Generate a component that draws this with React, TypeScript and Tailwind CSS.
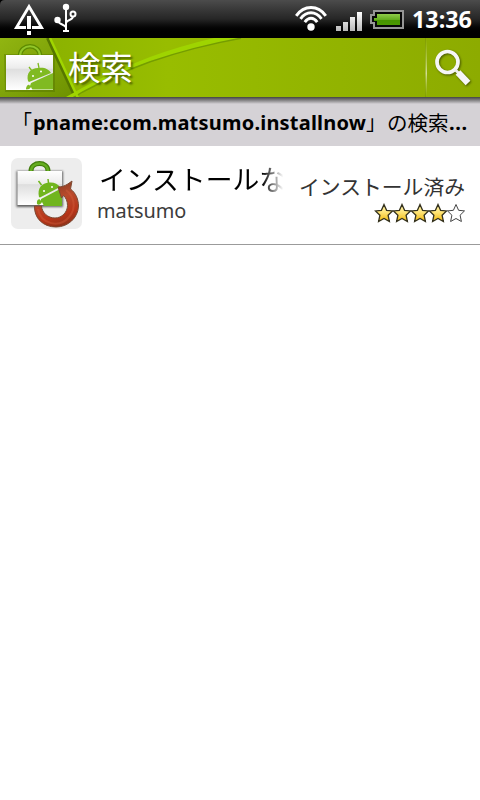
import React from "react";

const FONT = "font-['Noto_Sans','Noto_Sans_CJK_JP',sans-serif]";

function StatusBar() {
  return (
    <div className="flex h-[38px] shrink-0 items-start bg-linear-to-b from-[#4c4c4c] from-0% via-[#262626] via-50% to-black to-90%">
      <svg className="h-[38px] w-[84px]" viewBox="0 0 84 38">
        <path d="M0 0H5Q0 0 0 5Z" fill="#000" />
        <path d="M26 27.500H16.500L29 6.500L41.500 27.500H32" fill="none" stroke="#fff" strokeWidth="2.900" />
        <path d="M27 16h4v13h-4zM27 31h4v4h-4z" fill="#fff" />
        <g fill="none" stroke="#fff" strokeWidth="2">
          <path d="M66 7V31M58 21C59 25 65 24 66 27.500M66 23C67 19 73 21 73 16" />
          <circle cx="73" cy="14" r="2.500" />
        </g>
        <circle cx="66" cy="7" r="3.200" fill="#fff" />
        <circle cx="57.500" cy="20" r="3.200" fill="#fff" />
        <path d="M63 30h6v2h-6z" fill="#fff" />
      </svg>
      <svg className="ml-auto h-[38px] w-[116px]" viewBox="292 0 116 38">
        <defs>
          <linearGradient id="bar" x2="0" y2="1">
            <stop stopColor="#fff" />
            <stop offset="1" stopColor="#b8b8b8" />
          </linearGradient>
          <linearGradient id="charge" x2="0" y2="1">
            <stop stopColor="#8fcc4a" />
            <stop offset=".5" stopColor="#65ad20" />
            <stop offset=".51" stopColor="#479400" />
            <stop offset="1" stopColor="#4b9900" />
          </linearGradient>
        </defs>
        <g fill="none" stroke="#fff" strokeWidth="2.900">
          <path d="M296.200 15.800Q302 7.500 311 7.500T325.800 15.800" />
          <path d="M300.500 18.800Q305 12.800 311 12.800T321.500 18.800" />
          <path d="M304.800 22.200Q307.500 18.300 311 18.300T317.200 22.200" />
        </g>
        <circle cx="311" cy="27" r="3.700" fill="#fff" />
        <path d="M336 26h5v5h-5zM343 22h5v9h-5zM350 17h5v14h-5zM357 12h5v19h-5z" fill="url(#bar)" />
        <path d="M374 11H403V28H374V23H371V15H374Z" fill="#080808" stroke="#969696" strokeWidth="2" />
        <path d="M377 14H400V25H377V21H374V18H377Z" fill="url(#charge)" />
      </svg>
      <span className="mr-[9px] ml-[4px] w-[59px] text-[23.300px] leading-[39px] font-bold whitespace-nowrap text-white">13:36</span>
    </div>
  );
}

function Header() {
  return (
    <header className="relative flex h-[59px] shrink-0 items-center overflow-hidden bg-[#94b900]">
      <svg className="absolute inset-0 h-full w-full" viewBox="0 38 480 59">
        <defs>
          <linearGradient id="green">
            <stop stopColor="#86ae00" />
            <stop offset=".35" stopColor="#98bd00" />
            <stop offset="1" stopColor="#8dab00" />
          </linearGradient>
          <linearGradient id="corner" x2="1" y2="1">
            <stop stopColor="#91b511" />
            <stop offset="1" stopColor="#6c9000" />
          </linearGradient>
          <linearGradient id="rule" x2="0" y2="1">
            <stop stopColor="#b8cf58" stopOpacity="0" />
            <stop offset=".6" stopColor="#d3df94" />
            <stop offset="1" stopColor="#b8cf58" stopOpacity="0" />
          </linearGradient>
        </defs>
        <path d="M0 38H480V97H0Z" fill="url(#green)" />
        <path d="M0 38H50L78 97H0Z" fill="url(#corner)" />
        <path d="M47.500 38L75.500 98" stroke="#567600" strokeWidth="3" />
        <path d="M74 97L82 92Q116 74 150 61.500Q195 46 241 38" fill="none" stroke="#759d00" strokeWidth="2" />
        <path d="M66 97L82 88Q116 70 150 57Q180 46 214 38H238Q195 46 150 61Q116 73 82 91.500L73 97Z" fill="#9fd400" />
        <path d="M50 38L78 98" stroke="#a0d600" strokeWidth="2.500" />
        <path d="M425 38h1v59h-1z" fill="#829f00" />
        <path d="M425.500 38h1.500v59h-1.500z" fill="url(#rule)" />
      </svg>
      <svg className="relative h-[59px] w-[68px]" viewBox="0 38 68 59">
        <defs>
          <linearGradient id="bag" x2="0" y2="1">
            <stop stopColor="#fff" />
            <stop offset=".38" stopColor="#ececec" />
            <stop offset=".4" stopColor="#dedede" />
            <stop offset="1" stopColor="#fff" />
          </linearGradient>
          <clipPath id="bagClip"><path d="M6 55H53V89.500H6Z" /></clipPath>
        </defs>
        <path d="M4 54H55V92H5Z" fill="#506c00" opacity=".38" />
        <path d="M20 56C20 43 40 43 40 56" fill="none" stroke="#5d8a00" strokeWidth="4.500" />
        <path d="M20 56C20 43 40 43 40 56" fill="none" stroke="#92c72a" strokeWidth="2" />
        <path d="M6 55H53V90H6Z" fill="url(#bag)" />
        <g clipPath="url(#bagClip)" fill="#80ba22">
          <path d="M28 81C26 73 31 68 38 68C44 67 49 69 51 73L29 82Z" />
          <path d="M31 83L53 73V91H33L31 87C30 89 26 91 26 89C26 86 29 83 30 86Z" />
          <path d="M32 71L29 67M39 68L38 63" stroke="#80ba22" strokeWidth="1.300" />
        </g>
        <circle cx="33" cy="76" r="1" fill="#fff" />
        <circle cx="41" cy="71.500" r="1" fill="#fff" />
      </svg>
      <h1 className="relative text-[32.500px] leading-[59px] font-normal text-white [text-shadow:2px_2px_2px_#00000075]">検索</h1>
      <svg className="relative ml-auto h-[59px] w-[52px] drop-shadow-[1px_1px_1px_#00000080]" viewBox="428 38 52 59">
        <circle cx="447.500" cy="62" r="10.500" fill="none" stroke="#f6f6f6" strokeWidth="3.700" />
        <path d="M455 69.500L459 73.500" stroke="#eee" strokeWidth="3" />
        <path d="M458 72.500L468 83" stroke="#f6f6f6" strokeWidth="6.500" />
      </svg>
    </header>
  );
}

function AppIcon() {
  return (
    <svg className="h-[72px] w-[72px] shrink-0" viewBox="11 158 72 72">
      <defs>
        <linearGradient id="arrow" x1=".3" x2=".6" y2="1">
          <stop stopColor="#7e3a20" />
          <stop offset=".4" stopColor="#b94a2c" />
          <stop offset=".75" stopColor="#b83519" />
          <stop offset="1" stopColor="#8f3219" />
        </linearGradient>
        <filter id="soft"><feGaussianBlur stdDeviation="1" /></filter>
      </defs>
      <rect x="11" y="158" width="71" height="71" rx="7" fill="#ededed" />
      <path d="M16.500 171H63V207H16.500Z" fill="#333" opacity=".75" filter="url(#soft)" />
      <path d="M31 171C31 161 48 161 48 171" fill="none" stroke="#417c0c" strokeWidth="5" />
      <path d="M31 171C31 161 48 161 48 171" fill="none" stroke="#64ad20" strokeWidth="2.500" />
      <path d="M17.500 171H62V205H17.500Z" fill="url(#bag)" />
      <g fill="#70b51e">
        <path d="M39 197C37 188 42 183 49 182.500C54 182 58 184 60 187L40 197.500Z" />
        <path d="M41 199L62 188V206H44L42 202C40 206 36 205 37 202C37 199 40 198 41 201Z" />
        <path d="M41.500 185L38.500 181M48.500 183L48 179" stroke="#70b51e" strokeWidth="1.500" />
      </g>
      <circle cx="44" cy="191" r="1" fill="#fff" />
      <circle cx="52" cy="187" r="1" fill="#fff" />
      <path d="M34.500 206H41.500C42 213 48 218 55 218C62 218 67.500 212 67.500 205.500C67.500 201 66 198 63.500 195.500L61.500 198L58 187C64 187 68 184 72 181L70.500 189C76 193 78.500 200 78.500 206C78 218 68 227 56 227C43 227 34 218 34.500 206Z" fill="url(#arrow)" stroke="#7c4932" strokeWidth="1" />
      <path d="M38 209C41 225 60 228 69 217C77 208 74 196 66 190" fill="none" stroke="#d7603d" strokeWidth="2" opacity=".4" />
    </svg>
  );
}

function Stars() {
  return (
    <svg className="mt-px h-[20px] w-[92px]" viewBox="0 0 92 20">
      <defs>
        <linearGradient id="gold" x2="0" y2="1">
          <stop stopColor="#fff4b0" />
          <stop offset=".45" stopColor="#ffe578" />
          <stop offset="1" stopColor="#f0b80c" />
        </linearGradient>
      </defs>
      {[0, 18, 36, 54, 72].map((x, i) => (
        <path
          key={x}
          transform={`translate(${x} 0)`}
          d="M10 1.500L12.600 7.300L18.500 7.900L14.100 12.200L15.400 18.500L10 15.500L4.600 18.500L5.900 12.200L1.500 7.900L7.400 7.300Z"
          fill={i < 4 ? "url(#gold)" : "#fff"}
          stroke={i < 4 ? "#35321d" : "#444"}
          strokeWidth={i < 4 ? 1.3 : 1}
        />
      ))}
    </svg>
  );
}

export default function App() {
  return (
    <div className={`flex h-[800px] w-[480px] flex-col overflow-hidden bg-white ${FONT}`}>
      <StatusBar />
      <Header />
      <div className="h-[7px] shrink-0 bg-linear-to-b from-[#454545] to-[#d5d2d6]" />
      <div className="flex h-[42px] shrink-0 items-center bg-[#d5d2d6] pb-[4px] pl-[12px] text-[20px] whitespace-nowrap text-black">
        <span className="w-[21px]">「</span>
        <b className="w-[333px] tracking-[0.21px]">pname:com.matsumo.installnow</b>
        <span className="w-[21px]">」</span>
        <span className="w-[62px] text-[20.500px]">の検索</span>
        <b className="tracking-[0.6px]">...</b>
      </div>
      <main className="flex h-[99px] shrink-0 border-b border-[#9b9b9b] pt-[12px] pl-[11px]">
        <AppIcon />
        <div className="ml-[14px] flex w-[190px] flex-col">
          <div className="h-[40px] w-[190px] bg-linear-to-r from-black from-87% to-transparent to-98% bg-clip-text pl-[2px] text-[26.800px] leading-[43px] whitespace-nowrap text-transparent">インストールな</div>
          <div className="text-[19.900px] leading-[25px] text-[#3c3c3c]">matsumo</div>
        </div>
        <div className="ml-auto flex flex-col items-end pt-[14px] pr-[14px]">
          <div className="pr-px text-[20.800px] leading-[30px] whitespace-nowrap text-[#333]">インストール済み</div>
          <Stars />
        </div>
      </main>
    </div>
  );
}
